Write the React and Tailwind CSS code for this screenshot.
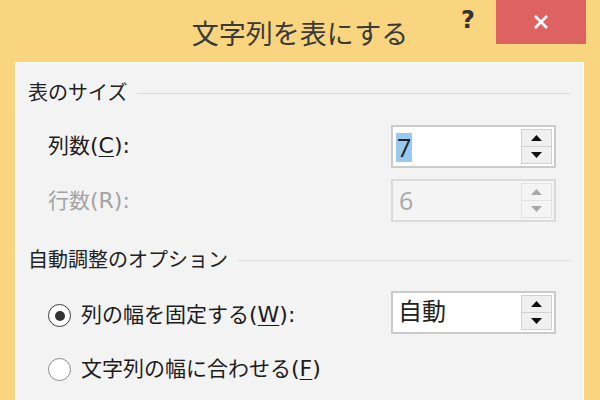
import React from 'react';

const jp = { fontFamily: '"DejaVu Sans", "Noto Sans CJK JP", sans-serif' };

const Arrow = ({ up, color }) => (
    <svg width="11" height="6" viewBox="0 0 11 6">
        {up ? <polygon points="5.5,0 11,6 0,6" fill={color} /> : <polygon points="0,0 11,0 5.5,6" fill={color} />}
    </svg>
);

const SpinBox = ({ children, disabled }) => {
    const arrow = disabled ? '#a8a8a8' : '#111111';
    return (
        <div
            className={`w-[165px] h-[43px] border-2 flex items-stretch ${
                disabled ? 'border-[#dadada] bg-[#f4f4f4]' : 'border-[#cbcbcb] bg-white'
            }`}
        >
            <div className="flex-1 flex items-center pl-[3px]">{children}</div>
            <div className="flex flex-col w-[31px] my-[2px] mr-[2px]">
                <div
                    className={`flex-1 flex items-center justify-center border ${
                        disabled ? 'border-[#e2e2e2] bg-[#f4f4f4]' : 'border-[#d0d0d0] bg-[#f0f0f0]'
                    }`}
                >
                    <Arrow up color={arrow} />
                </div>
                <div
                    className={`flex-1 flex items-center justify-center border border-t-0 ${
                        disabled ? 'border-[#e2e2e2] bg-[#f4f4f4]' : 'border-[#d0d0d0] bg-[#f0f0f0]'
                    }`}
                >
                    <Arrow color={arrow} />
                </div>
            </div>
        </div>
    );
};

// Latin part of a label (Meiryo's Latin glyphs run larger than its kana)
const Lat = ({ children }) => <span className="text-[22px] leading-none">{children}</span>;
const Key = ({ children }) => (
    <span className="underline underline-offset-[3px] decoration-1">{children}</span>
);

const SectionHeader = ({ title }) => (
    <div className="flex items-center gap-[10px] h-[28px]">
        <span className="text-[20px] leading-[28px] text-[#222]">{title}</span>
        <div className="flex-1 h-px bg-[#dcdcdc]" />
    </div>
);

const Radio = ({ checked }) => (
    <div
        className={`w-[23px] h-[23px] rounded-full border-[1.5px] bg-white flex items-center justify-center ${
            checked ? 'border-[#3c3c3c]' : 'border-[#8c8c8c]'
        }`}
    >
        {checked && <div className="w-[10px] h-[10px] rounded-full bg-[#333]" />}
    </div>
);

export default function App() {
    return (
        <div className="w-[600px] h-[400px] bg-[#f8d57e] flex flex-col overflow-hidden" style={jp}>
            {/* Title bar */}
            <div className="h-[62px] grid grid-cols-[1fr_auto_1fr] items-start shrink-0">
                <div />
                <div className="mt-[19px] text-[27px] leading-[32px] text-[#3a3a3a]">文字列を表にする</div>
                <div className="flex justify-end items-start">
                    <span className="mt-[6px] mr-[21px] text-[24px] font-bold leading-[28px] text-[#333]">?</span>
                    <div className="w-[90px] h-[44px] bg-[#df6262] flex items-center justify-center mr-[14px]">
                        <svg width="16" height="16" viewBox="0 0 16 16">
                            <path d="M2 2 L14 14 M14 2 L2 14" stroke="white" strokeWidth="2.6" />
                        </svg>
                    </div>
                </div>
            </div>

            {/* Content */}
            <div className="flex-1 ml-[15px] mr-[16px] bg-[#f3f3f3] border-t border-l border-r border-[#fbfbfb] px-[12px] pt-[16px]">
                <SectionHeader title="表のサイズ" />

                <div className="mt-[18px] flex items-center justify-between pl-[20px] pr-[15px]">
                    <span className="text-[21px] text-[#1c1c1c]">
                        列数<Lat>(<Key>C</Key>):</Lat>
                    </span>
                    <SpinBox>
                        <span className="font-['Open_Sans'] text-[25px] leading-[29px] bg-[#99c9ef] text-[#222] px-[1px] mt-[2px]">
                            7
                        </span>
                    </SpinBox>
                </div>

                <div className="mt-[11px] flex items-center justify-between pl-[20px] pr-[15px]">
                    <span className="text-[21px] text-[#a3a3a3] mt-[2px]">
                        行数<Lat>(R):</Lat>
                    </span>
                    <SpinBox disabled>
                        <span className="font-['Open_Sans'] text-[25px] leading-[29px] text-[#a9a9a9] pl-[3px]">6</span>
                    </SpinBox>
                </div>

                <div className="mt-[24px]">
                    <SectionHeader title="自動調整のオプション" />
                </div>

                <div className="mt-[17px] flex items-center justify-between pl-[20px] pr-[15px]">
                    <div className="flex items-center gap-[10px] mt-[6px]">
                        <Radio checked />
                        <span className="text-[21px] text-[#1c1c1c]">
                            列の幅を固定する<Lat>(<Key>W</Key>):</Lat>
                        </span>
                    </div>
                    <SpinBox>
                        <span className="text-[24px] leading-[29px] text-[#222] pl-[2px]">自動</span>
                    </SpinBox>
                </div>

                <div className="mt-[20px] flex items-center gap-[10px] pl-[20px]">
                    <Radio />
                    <span className="text-[21px] text-[#1c1c1c]">
                        文字列の幅に合わせる<Lat>(<Key>F</Key>)</Lat>
                    </span>
                </div>
            </div>
        </div>
    );
}
